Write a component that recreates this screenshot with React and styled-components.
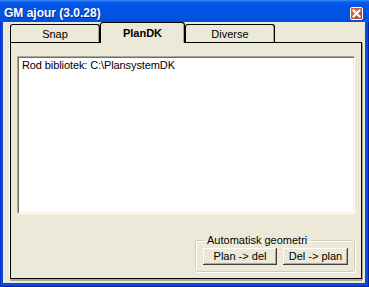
import React from "react";
import styled, { createGlobalStyle } from "styled-components";

const Global = createGlobalStyle`
  html, body { margin: 0; padding: 0; background: #fff; }
  body { font-family: "Liberation Sans", Arial, sans-serif; }
  * { box-sizing: border-box; }
`;

const Window = styled.div`
  width: 369px;
  height: 287px;
  display: flex;
  flex-direction: column;
  background: #0b4ddf;
`;

const TitleBar = styled.div`
  height: 22px;
  flex: none;
  display: flex;
  align-items: center;
  justify-content: space-between;
  padding: 4px 6px 0 4px;
  background: linear-gradient(
    to bottom,
    #3a8cf8 0px,
    #0d60ee 2px,
    #0056e8 5px,
    #0054e3 60%,
    #0250dc 100%
  );
`;

const Title = styled.span`
  color: #fff;
  font-size: 12px;
  font-weight: 700;
  text-shadow: 1px 1px 0 #0a2a9a;
  line-height: 14px;
`;

const CloseButton = styled.div`
  width: 13px;
  height: 13px;
  margin-top: 1px;
  border: 1px solid #fff;
  border-radius: 2px;
  background: radial-gradient(circle at 35% 35%, #d97a5c 0%, #c2573a 55%, #a9442a 100%);
  display: flex;
  align-items: center;
  justify-content: center;
`;

const Frame = styled.div`
  flex: 1;
  min-height: 0;
  display: flex;
  padding: 0 4px 4px 3px;
  background: #0a4ad9;
  box-shadow: inset 1px 0 #0a2fc4, inset -1px 0 #0025a8, inset 0 -1px #0025a8;
`;

const Client = styled.div`
  flex: 1;
  display: flex;
  flex-direction: column;
  background: #ece9d8;
  padding: 0 3px 4px 7px;
`;

const TabRow = styled.div`
  display: flex;
  align-items: flex-start;
  height: 21px;
  margin-bottom: -1px;
  position: relative;
  z-index: 2;
`;

const Tab = styled.div`
  width: ${(p) => p.$w}px;
  height: ${(p) => (p.$active ? 21 : 18)}px;
  margin-top: ${(p) => (p.$active ? 0 : 2)}px;
  display: flex;
  align-items: center;
  justify-content: center;
  border: 1px solid #000;
  border-bottom: none;
  border-radius: 3px 3px 0 0;
  background: #ece9d8;
  box-shadow: inset -1px 0 #aca899;
  font-size: 11px;
  font-weight: ${(p) => (p.$active ? 700 : 400)};
  color: #000;
  padding-bottom: ${(p) => (p.$active ? 1 : 0)}px;
`;

const Panel = styled.div`
  flex: 1;
  display: flex;
  flex-direction: column;
  border: 1px solid #000;
  background: #ece9d8;
  box-shadow: -1px 0 0 #fff, 1px 1px 0 #aca899, 0 2px 0 #aca899;
  padding: 13px 6px 6px 6px;
  position: relative;
  z-index: 1;
`;

const ListBox = styled.div`
  height: 158px;
  background: #fff;
  border: 1px solid;
  border-color: #aca899 #fff #fff #aca899;
  box-shadow: inset 1px 1px #716f64, inset -1px -1px #f1efe2;
  padding: 2px 4px;
  font-size: 11px;
  line-height: 13px;
  letter-spacing: -0.1px;
  color: #000;
`;

const Footer = styled.div`
  margin-top: auto;
  display: flex;
  justify-content: flex-end;
`;

const GroupBox = styled.fieldset`
  margin: 0;
  width: 160px;
  padding: 1px 6px 6px 7px;
  border: 1px solid #d0d0bf;
  border-radius: 2px;
  box-shadow: inset 1px 1px 0 #fff, 1px 1px 0 #fff;
  display: flex;
  gap: 6px;
`;

const Legend = styled.legend`
  font-size: 11px;
  line-height: 13px;
  color: #000;
  padding: 0 3px;
  margin-left: 1px;
`;

const Button = styled.button`
  width: ${(p) => p.$w}px;
  height: 17px;
  margin: 0;
  padding: 0 0 1px 0;
  border: none;
  background: #ece9d8;
  font-family: "Liberation Sans", Arial, sans-serif;
  font-size: 11px;
  color: #000;
  box-shadow: inset -1px -1px #404040, inset 1px 1px #fff, inset -2px -2px #aca899;
`;

export default function App() {
  return (
    <>
      <Global />
      <Window>
        <TitleBar>
          <Title>GM ajour (3.0.28)</Title>
          <CloseButton>
            <svg width="9" height="9" viewBox="0 0 9 9">
              <path d="M1.5 1.5 L7.5 7.5 M7.5 1.5 L1.5 7.5" stroke="#fff" strokeWidth="2" strokeLinecap="square" />
            </svg>
          </CloseButton>
        </TitleBar>
        <Frame>
          <Client>
            <TabRow>
              <Tab $w={90}>Snap</Tab>
              <Tab $w={85} $active>PlanDK</Tab>
              <Tab $w={90}>Diverse</Tab>
            </TabRow>
            <Panel>
              <ListBox>Rod bibliotek: C:\PlansystemDK</ListBox>
              <Footer>
                <GroupBox>
                  <Legend>Automatisk geometri</Legend>
                  <Button $w={74}>Plan -&gt; del</Button>
                  <Button $w={65}>Del -&gt; plan</Button>
                </GroupBox>
              </Footer>
            </Panel>
          </Client>
        </Frame>
      </Window>
    </>
  );
}
